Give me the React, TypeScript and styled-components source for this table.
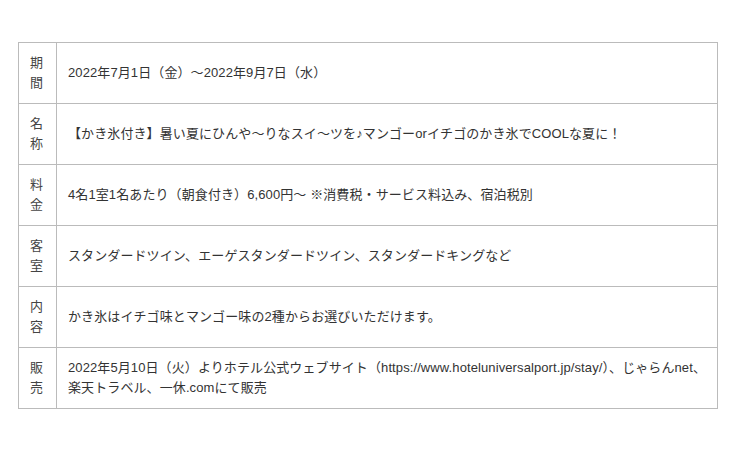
import React from "react";
import styled, { createGlobalStyle } from "styled-components";

const rows = [
    { label: "期間", text: ["2022年7月1日（金）～2022年9月7日（水）"] },
    {
        label: "名称",
        text: [
            "【かき氷付き】暑い夏にひんや～りなスイ～ツを♪マンゴーorイチゴのかき氷でCOOLな夏に！",
        ],
    },
    {
        label: "料金",
        text: [
            "4名1室1名あたり（朝食付き）6,600円～ ※消費税・サービス料込み、宿泊税別",
        ],
    },
    {
        label: "客室",
        text: [
            "スタンダードツイン、エーゲスタンダードツイン、スタンダードキングなど",
        ],
    },
    {
        label: "内容",
        text: ["かき氷はイチゴ味とマンゴー味の2種からお選びいただけます。"],
    },
    {
        label: "販売",
        text: [
            "2022年5月10日（火）よりホテル公式ウェブサイト（https://www.hoteluniversalport.jp/stay/）、じゃらんnet、",
            "楽天トラベル、一休.comにて販売",
        ],
    },
];

const App = () => {
    return (
        <>
            <GlobalStyle />
            <Page>
                <InfoTable>
                    <tbody>
                        {rows.map((row) => (
                            <tr key={row.label}>
                                <LabelCell>
                                    {row.label.split("").map((ch, i) => (
                                        <div key={i}>{ch}</div>
                                    ))}
                                </LabelCell>
                                <ValueCell>
                                    {row.text.map((line, i) => (
                                        <div key={i}>{line}</div>
                                    ))}
                                </ValueCell>
                            </tr>
                        ))}
                    </tbody>
                </InfoTable>
            </Page>
        </>
    );
};

export default App;

const GlobalStyle = createGlobalStyle`
    body {
        margin: 0;
        background: #fff;
        font-family: "Liberation Sans", "Noto Sans CJK JP", sans-serif;
        color: #333;
    }
`;

const Page = styled.div`
    width: 740px;
    height: 449px;
    padding: 42px 0 0 18px;
    box-sizing: border-box;
`;

const InfoTable = styled.table`
    width: 700px;
    border-collapse: collapse;
    font-size: 13px;
    line-height: 20px;
`;

const LabelCell = styled.td`
    width: 38px;
    box-sizing: border-box;
    padding: 10px 0 10px 11px;
    border: 1px solid #bbb;
    vertical-align: middle;
    color: #444;
`;

const ValueCell = styled.td`
    padding: 10px 10px 10px 11px;
    border: 1px solid #bbb;
    vertical-align: middle;
    white-space: nowrap;
    letter-spacing: 0.1px;
`;
